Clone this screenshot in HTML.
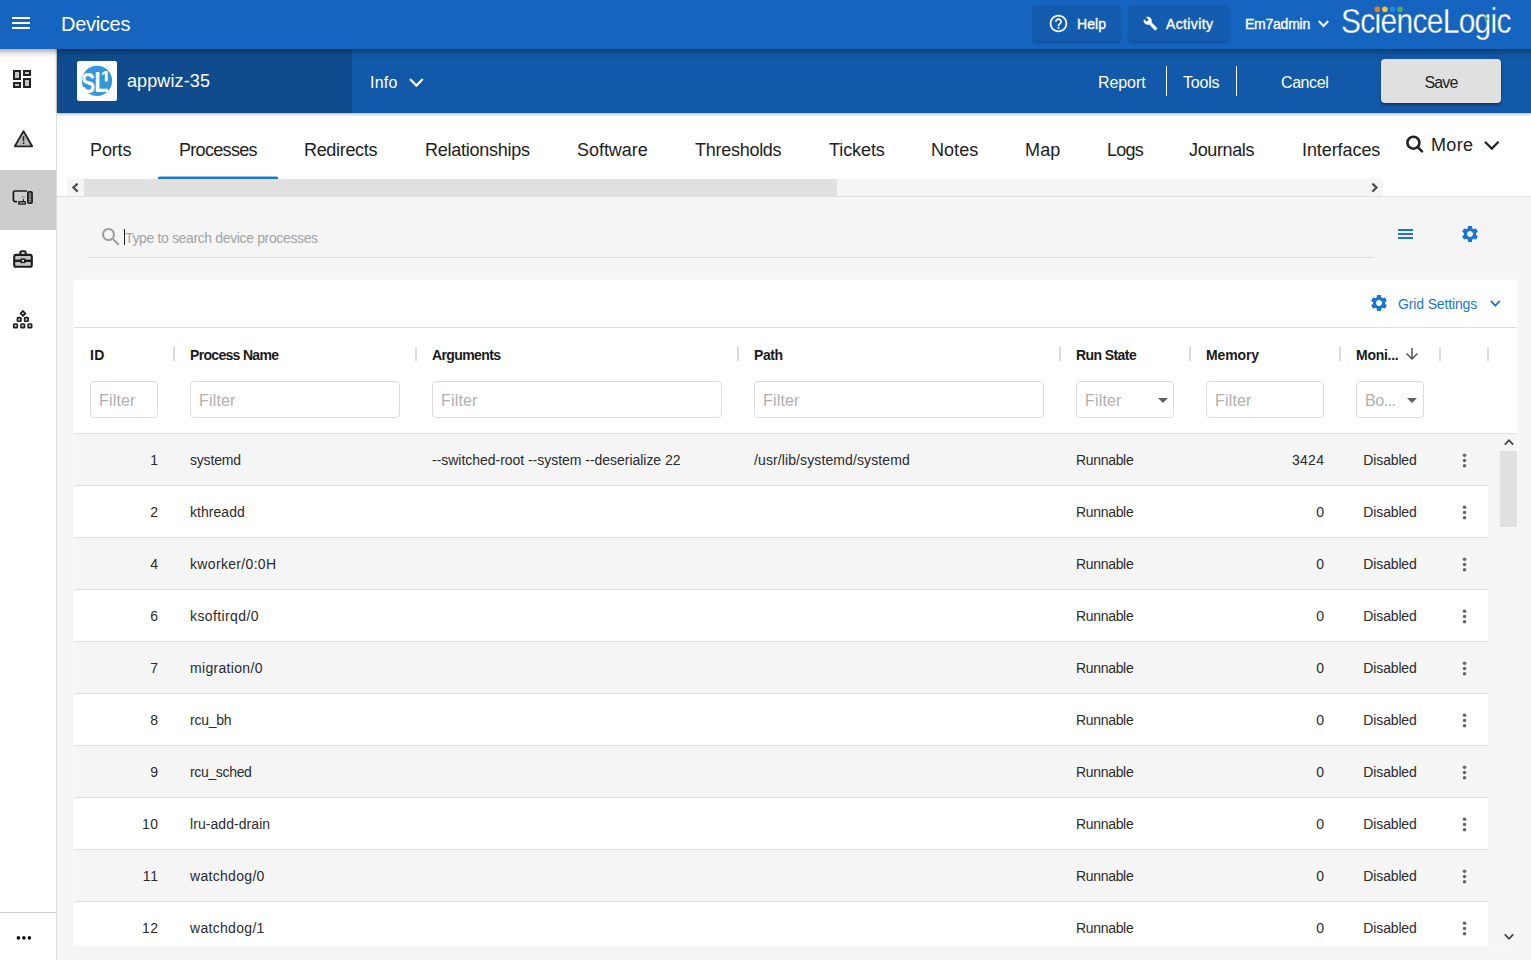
<!DOCTYPE html>
<html lang="en"><head>
<meta charset="utf-8">
<title>Devices</title>
<style>
*{box-sizing:border-box;margin:0;padding:0}
html,body{width:1531px;height:960px;overflow:hidden;background:#f5f5f5;font-family:"Liberation Sans",sans-serif;color:#222}
.abs,#top,#side,#sub,#tabs,#content,#card{position:absolute}
.t{position:absolute;white-space:nowrap;line-height:20px}
svg{position:absolute;display:block;overflow:visible}
/* top bar */
#top{left:0;top:0;width:1531px;height:49px;background:#1565c0;z-index:30;color:#fff}
#topsh{position:absolute;left:-30px;top:0;width:1591px;height:49px;z-index:29;box-shadow:0 2px 4px -1px rgba(0,0,0,.2),0 4px 5px 0 rgba(0,0,0,.14),0 1px 10px 0 rgba(0,0,0,.12)}
#top .title{left:61px;top:4px;font-size:20px;line-height:40px;letter-spacing:-.3px}
.tbtn{position:absolute;top:5px;height:36px;border-radius:4px;background:#145cb0;box-shadow:0 2px 3px rgba(0,0,0,.22)}
#top .s14{font-size:14px;line-height:20px;top:14px;-webkit-text-stroke:.35px #fff}
/* sidebar */
#side{left:0;top:48px;width:57px;height:912px;background:#fff;border-right:1px solid #dcdcdc;z-index:10}
#side .act{position:absolute;left:0;top:122px;width:56px;height:60px;background:#cdcdcd}
#side .sep{position:absolute;left:0;top:864px;width:56px;height:1px;background:#ccc}
/* sub header */
#sub{left:57px;top:48px;width:1474px;height:65px;background:#12599a;z-index:20;color:#fff;box-shadow:0 1px 3px rgba(0,0,0,.35)}
#sub{background:#1259a9}
#sub .dark{position:absolute;left:0;top:0;width:295px;height:65px;background:#104b8e}
#sub .logo{position:absolute;left:20px;top:13px;width:40px;height:40px;background:#fff;border-radius:2px}
#sub .s16{font-size:16px;line-height:20px;top:25px}
#sub .vd{position:absolute;top:18px;width:1px;height:30px;background:#fff}
#sub .save{position:absolute;left:1324px;top:11px;width:120px;height:44px;border-radius:4px;background:#e0e0e0;box-shadow:0 2px 3px rgba(0,0,0,.4);color:#222}
/* tabs */
#tabs{left:57px;top:113px;width:1474px;height:84px;background:#fff;border-bottom:1px solid #e0e0e0}
#tabs .tab{font-size:18px;line-height:24px;top:25px;color:#222}
#tabs .ul{position:absolute;left:101px;top:63px;width:120px;height:3px;background:linear-gradient(rgba(25,118,210,.45) 0,rgba(25,118,210,.45) 1px,#1976d2 1px);border-radius:2px 2px 0 0}
#tabs .sb{position:absolute;left:10px;top:66px;width:1316px;height:17px;background:#f5f5f5}
#tabs .sb .thumb{position:absolute;left:17px;top:0;width:753px;height:17px;background:#e0e0e0}
#tabs .more{font-size:18px;line-height:24px;top:20px;left:1374px;color:#222}
/* content */
#content{left:57px;top:197px;width:1474px;height:763px;background:#f5f5f5}
#content .ph{font-size:14px;line-height:20px;left:68px;top:31px;color:#a3a3a3}
#content .caret{position:absolute;left:67px;top:32px;width:1px;height:16px;background:#222}
#content .sline{position:absolute;left:32px;top:60px;width:1285px;height:1px;background:#dcdcdc}
#card{left:74px;top:280px;width:1443px;height:665px;background:#fff;border-radius:3px;overflow:hidden;box-shadow:0 0 0 1px #fafafa}
#card .gs{font-size:14px;line-height:20px;left:1324px;top:14px;color:#1976d2;letter-spacing:-.15px}
#card .hl{position:absolute;left:0;width:1443px;height:1px;background:#e0e0e0}
#card .vs{position:absolute;top:67px;width:2px;height:14px;background:#dcdcdc}
#card .h{font-size:14px;font-weight:bold;line-height:20px;top:65px;color:#1a1a1a}
#card .f{position:absolute;top:101px;height:37px;border:1px solid #dcdcdc;border-radius:4px;background:#fff;font-size:16px;line-height:37px;color:#b0b0b0;padding-left:8px;white-space:nowrap}
.row{position:absolute;left:0;width:1414px;height:52px;border-bottom:1px solid #e0e0e0;font-size:14px;color:#2b2b2b}
.row.odd{background:#f5f5f5}
.row .c{position:absolute;top:16px;line-height:20px;white-space:nowrap}
.c-id{right:1330px;text-align:right}
.c-name{left:116px}
.c-args{left:358px}
.c-path{left:680px}
.c-run{left:1002px}
.c-mem{right:164px;text-align:right}
.c-mon{left:1266px;width:100px;text-align:center}
.kebab{left:1379.5px;top:15.5px;width:21px;height:21px;fill:#666}
#card .vsb{position:absolute;left:1414px;top:154px;width:29px;height:511px;background:#f5f5f5}
#card .vsb .thumb{position:absolute;left:12px;top:17px;width:17px;height:76px;background:#e0e0e0}

</style>
</head>
<body>
<!-- ===== top bar ===== -->
<div id="topsh"></div>
<div id="top">
  <svg style="left:9px;top:11px" width="24" height="24" viewBox="0 0 24 24" fill="#fff"><path d="M3 18h18v-2H3v2zm0-5h18v-2H3v2zm0-7v2h18V6H3z"></path></svg>
  <span class="t title" style="letter-spacing: -0.29px;">Devices</span>
  <div class="tbtn" style="left:1033px;width:88px"></div>
  <svg style="left:1048px;top:13px" width="21" height="21" viewBox="0 0 24 24" fill="#fff"><path d="M11 18h2v-2h-2v2zm1-16C6.48 2 2 6.48 2 12s4.48 10 10 10 10-4.48 10-10S17.52 2 12 2zm0 18c-4.41 0-8-3.59-8-8s3.59-8 8-8 8 3.59 8 8-3.59 8-8 8zm0-14c-2.21 0-4 1.79-4 4h2c0-1.1.9-2 2-2s2 .9 2 2c0 2-3 1.75-3 5h2c0-2.25 3-2.5 3-5 0-2.21-1.79-4-4-4z"></path></svg>
  <span class="t s14" style="left: 1077px; letter-spacing: 0.06px;">Help</span>
  <div class="tbtn" style="left:1129px;width:100px"></div>
  <svg style="left:1143px;top:16px" width="15" height="15" viewBox="0 0 24 24" fill="#fff"><path d="M22.7 19l-9.1-9.1c.9-2.3.4-5-1.5-6.9-2-2-5-2.4-7.4-1.3L9 6 6 9 1.6 4.7C.4 7.1.9 10.1 2.9 12.1c1.9 1.9 4.6 2.4 6.9 1.5l9.1 9.1c.4.4 1 .4 1.4 0l2.3-2.3c.5-.4.5-1.1.1-1.4z"></path></svg>
  <span class="t s14" style="left: 1166px; letter-spacing: 0.38px;">Activity</span>
  <span class="t s14" style="left: 1245px; letter-spacing: -0.24px;">Em7admin</span>
  <svg style="left:1318px;top:19.5px" width="11" height="8" viewBox="0 0 11 8" fill="none" stroke="#fff" stroke-width="2"><path d="M0.8 1l4.7 5 4.7-5"></path></svg>
  <span class="t brand" style="left:1341px;top:0;font-size:34.5px;line-height:48px;letter-spacing:-.8px;transform:translateY(-3.45px) scaleX(.868);transform-origin:0 0;-webkit-text-stroke:.3px #1565c0">ScienceLogic</span>
  <svg style="left:1374px;top:6px" width="30" height="7" viewBox="0 0 30 7"><circle cx="3.3" cy="3.2" r="2.8" fill="#f57c00"></circle><circle cx="10.9" cy="3.2" r="2.8" fill="#fbc02d"></circle><circle cx="18.6" cy="3.2" r="2.8" fill="#1e88e5"></circle><circle cx="26" cy="3.2" r="2.8" fill="#4caf50"></circle></svg>
  <svg style="left:1484px;top:16px" width="6" height="6" viewBox="0 0 6 6"><path d="M0 0l5 2.5L1 5.5z" fill="#4caf50"></path></svg>
</div>

<!-- ===== sidebar ===== -->
<div id="side">
  <div class="act"></div>
  <div class="sep"></div>
  <!-- dashboard -->
  <svg style="left:12px;top:21px" width="20" height="20" viewBox="0 0 20 20" fill="#c4c4c4" stroke="#222" stroke-width="2"><rect x="2" y="2" width="6" height="8"></rect><rect x="12" y="2" width="6" height="4"></rect><rect x="2" y="14" width="6" height="4"></rect><rect x="12" y="10" width="6" height="8"></rect></svg>
  <!-- warning -->
  <svg style="left:13px;top:81px" width="21" height="19" viewBox="0 0 21 19"><path d="M10.5 2.2L19.2 17.3H1.8z" fill="#bdbdbd" stroke="#222" stroke-width="1.8" stroke-linejoin="round"></path><rect x="9.7" y="7.2" width="1.6" height="5" fill="#222"></rect><rect x="9.7" y="13.4" width="1.6" height="1.7" fill="#222"></rect></svg>
  <!-- devices -->
  <svg style="left:12px;top:141px" width="22" height="17" viewBox="0 0 22 17" fill="none" stroke="#1c1c1c" stroke-width="1.7"><path d="M15 2H3c-.9 0-1.6.6-1.6 1.5v7.6c0 .9.7 1.5 1.6 1.5h2"></path><rect x="15.8" y="2.8" width="4.3" height="11.3" rx="1.2" fill="#666" stroke-width="1.6"></rect><path d="M17.95 5.2v.1M17.95 7.7v.1M17.95 10.3v.1M17.95 12.6v.1" stroke="#d8d8d8" stroke-width="1.1" stroke-linecap="round"></path><rect x="6.7" y="12.7" width="6.6" height="2.4" rx=".4" fill="#aaa" stroke-width="1.3"></rect><path d="M11.4 12V10" stroke-width="1.1"></path><path d="M9.4 8h3.6" stroke-width="1" stroke-opacity=".6" stroke-dasharray="1.3 .5"></path></svg>
  <!-- briefcase -->
  <svg style="left:12px;top:201px" width="22" height="20" viewBox="0 0 22 20" fill="none" stroke="#1c1c1c" stroke-width="2.1"><path d="M8.3 5.4V3.7c0-.9.5-1.4 1.3-1.4h2.8c.8 0 1.3.5 1.3 1.4v1.7"></path><rect x="2.2" y="5.9" width="17.6" height="11.9" rx="1.8" fill="#c4c4c4"></rect><path d="M2.2 11.8h17.6" stroke-width="2.4"></path><rect x="9.3" y="10.2" width="3.4" height="3.2" fill="#fff" stroke-width="1.5"></rect></svg>
  <!-- org -->
  <svg style="left:12px;top:262px" width="22" height="20" viewBox="0 0 22 20" fill="#c8c8c8" stroke="#1c1c1c" stroke-width="1.6"><path d="M11 1l2.4 2.4L11 5.8 8.6 3.4z"></path><rect x="5.4" y="7.6" width="3.6" height="3.6" rx=".7"></rect><rect x="12.6" y="7.6" width="3.6" height="3.6" rx=".7"></rect><rect x="1.7" y="14" width="3.6" height="3.6" rx=".7"></rect><rect x="8.9" y="14" width="3.6" height="3.6" rx=".7"></rect><rect x="16.1" y="14" width="3.6" height="3.6" rx=".7"></rect></svg>
  <!-- more dots -->
  <svg style="left:16px;top:887px" width="16" height="6" viewBox="0 0 16 6" fill="#111"><circle cx="2.4" cy="2.9" r="1.8"></circle><circle cx="7.9" cy="2.9" r="1.8"></circle><circle cx="13.4" cy="2.9" r="1.8"></circle></svg>
</div>

<!-- ===== sub header ===== -->
<div id="sub">
  <div class="dark"></div>
  <div class="logo">
    <svg style="left:5px;top:5px" width="30" height="30" viewBox="0 0 30 30"><defs><clipPath id="c1"><rect x="15" y="0" width="15" height="15.6"></rect></clipPath></defs><circle cx="15" cy="14.8" r="15.1" fill="#3498d8"></circle><g font-family="Liberation Sans, sans-serif" font-weight="bold" fill="#fff"><text transform="translate(-0.9,27.1) scale(.72,1)" font-size="29.6">S</text><text transform="translate(12.2,26.3) scale(.78,1)" font-size="30">L</text><g clip-path="url(#c1)"><text transform="translate(18.6,17.5)" font-size="18.8">1</text></g></g></svg>
  </div>
  <span class="t" style="left: 70px; top: 21px; font-size: 18px; line-height: 24px; letter-spacing: 0.11px;">appwiz-35</span>
  <span class="t s16" style="left: 313px; letter-spacing: 0.22px;">Info</span>
  <svg style="left:352px;top:30px" width="15" height="9" viewBox="0 0 15 9" fill="none" stroke="#fff" stroke-width="2.2"><path d="M1 1l6.4 6.6L13.8 1"></path></svg>
  <span class="t s16" style="left: 1041px; letter-spacing: -0.08px;">Report</span>
  <div class="vd" style="left:1109px"></div>
  <span class="t s16" style="left: 1126px; letter-spacing: -0.2px;">Tools</span>
  <div class="vd" style="left:1179px"></div>
  <span class="t s16" style="left: 1224px; letter-spacing: -0.42px;">Cancel</span>
  <div class="save"><span class="t" style="left: 0px; width: 120px; text-align: center; top: 14px; font-size: 16px; line-height: 20px; letter-spacing: -0.91px;">Save</span></div>
</div>

<!-- ===== tabs ===== -->
<div id="tabs">
  <span class="t tab" style="left: 33px; letter-spacing: -0.13px;">Ports</span>
  <span class="t tab" style="left: 122px; letter-spacing: -0.69px;">Processes</span>
  <span class="t tab" style="left: 247px; letter-spacing: -0.32px;">Redirects</span>
  <span class="t tab" style="left: 368px; letter-spacing: -0.26px;">Relationships</span>
  <span class="t tab" style="left: 520px; letter-spacing: -0.04px;">Software</span>
  <span class="t tab" style="left: 638px; letter-spacing: -0.27px;">Thresholds</span>
  <span class="t tab" style="left: 772px; letter-spacing: -0.08px;">Tickets</span>
  <span class="t tab" style="left: 874px; letter-spacing: 0.04px;">Notes</span>
  <span class="t tab" style="left: 968px; letter-spacing: 0.15px;">Map</span>
  <span class="t tab" style="left: 1050px; letter-spacing: -0.78px;">Logs</span>
  <span class="t tab" style="left: 1132px; letter-spacing: -0.37px;">Journals</span>
  <span class="t tab" style="left: 1245px; letter-spacing: -0.08px;">Interfaces</span>
  <div class="ul"></div>
  <div class="sb"><div class="thumb"></div>
    <svg style="left:4px;top:4px" width="9" height="9" viewBox="0 0 9 9" fill="none" stroke="#505050" stroke-width="2.2"><path d="M6.6 0.6L2.4 4.6l4.2 4"></path></svg>
    <svg style="left:1303px;top:4px" width="9" height="9" viewBox="0 0 9 9" fill="none" stroke="#505050" stroke-width="2.2"><path d="M2.4 0.6l4.2 4-4.2 4"></path></svg>
  </div>
  <svg style="left:1348px;top:22px" width="19" height="19" viewBox="0 0 19 19" fill="none" stroke="#222" stroke-width="2.6"><circle cx="8.4" cy="7.7" r="6"></circle><path d="M12.8 12.2l4.2 4.2" stroke-linecap="round"></path></svg>
  <span class="t more" style="letter-spacing: 0.33px;">More</span>
  <svg style="left:1427px;top:28px" width="16" height="10" viewBox="0 0 16 10" fill="none" stroke="#222" stroke-width="2.2"><path d="M1 0.8l6.8 6.8 6.8-6.8"></path></svg>
</div>

<!-- ===== content ===== -->
<div id="content">
  <svg style="left:42px;top:28px" width="24" height="24" viewBox="0 0 24 24" fill="#a0a0a0"><path d="M15.5 14h-.79l-.28-.27C15.41 12.59 16 11.11 16 9.5 16 5.91 13.09 3 9.5 3S3 5.91 3 9.5 5.91 16 9.5 16c1.61 0 3.09-.59 4.23-1.57l.27.28v.79l5 4.99L20.49 19l-4.99-5zm-6 0C7.01 14 5 11.99 5 9.5S7.01 5 9.5 5 14 7.01 14 9.5 11.99 14 9.5 14z"></path></svg>
  <div class="caret"></div>
  <span class="t ph" style="letter-spacing: -0.36px;">Type to search device processes</span>
  <div class="sline"></div>
  <svg style="left:1341px;top:32px" width="16" height="10" viewBox="0 0 16 10" fill="#1976d2"><rect x="0" y="0" width="15" height="2"></rect><rect x="0" y="4" width="15" height="2"></rect><rect x="0" y="8" width="15" height="2"></rect></svg>
  <svg style="left:1403px;top:27px" width="20" height="20" viewBox="0 0 24 24" fill="#1976d2"><path d="M19.14,12.94c0.04-0.3,0.06-0.61,0.06-0.94c0-0.32-0.02-0.64-0.07-0.94l2.03-1.58c0.18-0.14,0.23-0.41,0.12-0.61 l-1.92-3.32c-0.12-0.22-0.37-0.29-0.59-0.22l-2.39,0.96c-0.5-0.38-1.03-0.7-1.62-0.94L14.4,2.81c-0.04-0.24-0.24-0.41-0.48-0.41 h-3.84c-0.24,0-0.43,0.17-0.47,0.41L9.25,5.35C8.66,5.59,8.12,5.92,7.63,6.29L5.24,5.33c-0.22-0.08-0.47,0-0.59,0.22L2.74,8.87 C2.62,9.08,2.66,9.34,2.86,9.48l2.03,1.58C4.84,11.36,4.8,11.69,4.8,12s0.02,0.64,0.07,0.94l-2.03,1.58 c-0.18,0.14-0.23,0.41-0.12,0.61l1.92,3.32c0.12,0.22,0.37,0.29,0.59,0.22l2.39-0.96c0.5,0.38,1.03,0.7,1.62,0.94l0.36,2.54 c0.05,0.24,0.24,0.41,0.48,0.41h3.84c0.24,0,0.44-0.17,0.47-0.41l0.36-2.54c0.59-0.24,1.13-0.56,1.62-0.94l2.39,0.96 c0.22,0.08,0.47,0,0.59-0.22l1.92-3.32c0.12-0.22,0.07-0.47-0.12-0.61L19.14,12.94z M12,15.6c-1.98,0-3.6-1.62-3.6-3.6 s1.62-3.6,3.6-3.6s3.6,1.62,3.6,3.6S13.98,15.6,12,15.6z"></path></svg>
</div>

<!-- ===== card ===== -->
<div id="card">
  <svg style="left:1295px;top:13px" width="20" height="20" viewBox="0 0 24 24" fill="#1976d2"><path d="M19.14,12.94c0.04-0.3,0.06-0.61,0.06-0.94c0-0.32-0.02-0.64-0.07-0.94l2.03-1.58c0.18-0.14,0.23-0.41,0.12-0.61 l-1.92-3.32c-0.12-0.22-0.37-0.29-0.59-0.22l-2.39,0.96c-0.5-0.38-1.03-0.7-1.62-0.94L14.4,2.81c-0.04-0.24-0.24-0.41-0.48-0.41 h-3.84c-0.24,0-0.43,0.17-0.47,0.41L9.25,5.35C8.66,5.59,8.12,5.92,7.63,6.29L5.24,5.33c-0.22-0.08-0.47,0-0.59,0.22L2.74,8.87 C2.62,9.08,2.66,9.34,2.86,9.48l2.03,1.58C4.84,11.36,4.8,11.69,4.8,12s0.02,0.64,0.07,0.94l-2.03,1.58 c-0.18,0.14-0.23,0.41-0.12,0.61l1.92,3.32c0.12,0.22,0.37,0.29,0.59,0.22l2.39-0.96c0.5,0.38,1.03,0.7,1.62,0.94l0.36,2.54 c0.05,0.24,0.24,0.41,0.48,0.41h3.84c0.24,0,0.44-0.17,0.47-0.41l0.36-2.54c0.59-0.24,1.13-0.56,1.62-0.94l2.39,0.96 c0.22,0.08,0.47,0,0.59-0.22l1.92-3.32c0.12-0.22,0.07-0.47-0.12-0.61L19.14,12.94z M12,15.6c-1.98,0-3.6-1.62-3.6-3.6 s1.62-3.6,3.6-3.6s3.6,1.62,3.6,3.6S13.98,15.6,12,15.6z"></path></svg>
  <span class="t gs" style="letter-spacing: -0.14px;">Grid Settings</span>
  <svg style="left:1416px;top:20px" width="11" height="7" viewBox="0 0 11 7" fill="none" stroke="#1976d2" stroke-width="1.8"><path d="M0.8 0.8l4.5 4.8 4.5-4.8"></path></svg>
  <div class="hl" style="top:47px"></div>
  <div class="hl" style="top:153px"></div>

  <span class="t h" style="left:16px;letter-spacing:.4px">ID</span>
  <span class="t h" style="left:116px;letter-spacing:-.68px">Process Name</span>
  <span class="t h" style="left:358px;letter-spacing:-.6px">Arguments</span>
  <span class="t h" style="left:680px;letter-spacing:-.44px">Path</span>
  <span class="t h" style="left:1002px;letter-spacing:-.58px">Run State</span>
  <span class="t h" style="left: 1132px; letter-spacing: -0.14px;">Memory</span>
  <span class="t h" style="left:1282px;letter-spacing:-.26px">Moni...</span>
  <svg style="left:1329px;top:65px" width="18" height="18" viewBox="0 0 24 24" fill="#555"><path d="M20 12l-1.41-1.41L13 16.17V4h-2v12.17l-5.58-5.59L4 12l8 8 8-8z"></path></svg>
  <div class="vs" style="left:99px"></div><div class="vs" style="left:341px"></div><div class="vs" style="left:663px"></div><div class="vs" style="left:985px"></div><div class="vs" style="left:1115px"></div><div class="vs" style="left:1265px"></div><div class="vs" style="left:1365px"></div><div class="vs" style="left:1413px"></div>

  <div class="f" style="left: 16px; width: 68px; letter-spacing: 0.17px;">Filter</div>
  <div class="f" style="left: 116px; width: 210px; letter-spacing: 0.17px;">Filter</div>
  <div class="f" style="left: 358px; width: 290px; letter-spacing: 0.17px;">Filter</div>
  <div class="f" style="left: 680px; width: 290px; letter-spacing: 0.17px;">Filter</div>
  <div class="f" style="left: 1002px; width: 98px; letter-spacing: 0.17px;">Filter<svg style="left:81px;top:16px" width="10" height="5" viewBox="0 0 10 5" fill="#616161"><path d="M0 0h10L5 5z"></path></svg></div>
  <div class="f" style="left: 1132px; width: 118px; letter-spacing: 0.17px;">Filter</div>
  <div class="f" style="left: 1282px; width: 68px; letter-spacing: -0.46px;">Bo...<svg style="left:50px;top:16px" width="10" height="5" viewBox="0 0 10 5" fill="#616161"><path d="M0 0h10L5 5z"></path></svg></div>

<div class="row odd" style="top:154px"><span class="c c-id" style="letter-spacing: 0.33px; right: 1329.67px;">1</span><span class="c c-name" style="letter-spacing: -0.19px;">systemd</span><span class="c c-args" style="letter-spacing: -0.03px;">--switched-root --system --deserialize 22</span><span class="c c-path" style="letter-spacing: 0.11px;">/usr/lib/systemd/systemd</span><span class="c c-run" style="letter-spacing: -0.32px;">Runnable</span><span class="c c-mem" style="letter-spacing: 0.33px; right: 163.67px;">3424</span><span class="c c-mon" style="letter-spacing: -0.15px;">Disabled</span><svg class="kebab" viewBox="0 0 24 24"><circle cx="12" cy="6" r="2"></circle><circle cx="12" cy="12" r="2"></circle><circle cx="12" cy="18" r="2"></circle></svg></div>
<div class="row" style="top:206px"><span class="c c-id" style="letter-spacing: 0.33px; right: 1329.67px;">2</span><span class="c c-name" style="letter-spacing: 0.04px;">kthreadd</span><span class="c c-run" style="letter-spacing: -0.32px;">Runnable</span><span class="c c-mem" style="letter-spacing: 0.33px; right: 163.67px;">0</span><span class="c c-mon" style="letter-spacing: -0.15px;">Disabled</span><svg class="kebab" viewBox="0 0 24 24"><circle cx="12" cy="6" r="2"></circle><circle cx="12" cy="12" r="2"></circle><circle cx="12" cy="18" r="2"></circle></svg></div>
<div class="row odd" style="top:258px"><span class="c c-id" style="letter-spacing: 0.33px; right: 1329.67px;">4</span><span class="c c-name" style="letter-spacing: 0.33px;">kworker/0:0H</span><span class="c c-run" style="letter-spacing: -0.32px;">Runnable</span><span class="c c-mem" style="letter-spacing: 0.33px; right: 163.67px;">0</span><span class="c c-mon" style="letter-spacing: -0.15px;">Disabled</span><svg class="kebab" viewBox="0 0 24 24"><circle cx="12" cy="6" r="2"></circle><circle cx="12" cy="12" r="2"></circle><circle cx="12" cy="18" r="2"></circle></svg></div>
<div class="row" style="top:310px"><span class="c c-id" style="letter-spacing: 0.33px; right: 1329.67px;">6</span><span class="c c-name" style="letter-spacing: 0.39px;">ksoftirqd/0</span><span class="c c-run" style="letter-spacing: -0.32px;">Runnable</span><span class="c c-mem" style="letter-spacing: 0.33px; right: 163.67px;">0</span><span class="c c-mon" style="letter-spacing: -0.15px;">Disabled</span><svg class="kebab" viewBox="0 0 24 24"><circle cx="12" cy="6" r="2"></circle><circle cx="12" cy="12" r="2"></circle><circle cx="12" cy="18" r="2"></circle></svg></div>
<div class="row odd" style="top:362px"><span class="c c-id" style="letter-spacing: 0.33px; right: 1329.67px;">7</span><span class="c c-name" style="letter-spacing: 0.32px;">migration/0</span><span class="c c-run" style="letter-spacing: -0.32px;">Runnable</span><span class="c c-mem" style="letter-spacing: 0.33px; right: 163.67px;">0</span><span class="c c-mon" style="letter-spacing: -0.15px;">Disabled</span><svg class="kebab" viewBox="0 0 24 24"><circle cx="12" cy="6" r="2"></circle><circle cx="12" cy="12" r="2"></circle><circle cx="12" cy="18" r="2"></circle></svg></div>
<div class="row" style="top:414px"><span class="c c-id" style="letter-spacing: 0.33px; right: 1329.67px;">8</span><span class="c c-name" style="letter-spacing: -0.24px;">rcu_bh</span><span class="c c-run" style="letter-spacing: -0.32px;">Runnable</span><span class="c c-mem" style="letter-spacing: 0.33px; right: 163.67px;">0</span><span class="c c-mon" style="letter-spacing: -0.15px;">Disabled</span><svg class="kebab" viewBox="0 0 24 24"><circle cx="12" cy="6" r="2"></circle><circle cx="12" cy="12" r="2"></circle><circle cx="12" cy="18" r="2"></circle></svg></div>
<div class="row odd" style="top:466px"><span class="c c-id" style="letter-spacing: 0.33px; right: 1329.67px;">9</span><span class="c c-name" style="letter-spacing: -0.34px;">rcu_sched</span><span class="c c-run" style="letter-spacing: -0.32px;">Runnable</span><span class="c c-mem" style="letter-spacing: 0.33px; right: 163.67px;">0</span><span class="c c-mon" style="letter-spacing: -0.15px;">Disabled</span><svg class="kebab" viewBox="0 0 24 24"><circle cx="12" cy="6" r="2"></circle><circle cx="12" cy="12" r="2"></circle><circle cx="12" cy="18" r="2"></circle></svg></div>
<div class="row" style="top:518px"><span class="c c-id" style="letter-spacing: 0.33px; right: 1329.67px;">10</span><span class="c c-name" style="letter-spacing: 0.06px;">lru-add-drain</span><span class="c c-run" style="letter-spacing: -0.32px;">Runnable</span><span class="c c-mem" style="letter-spacing: 0.33px; right: 163.67px;">0</span><span class="c c-mon" style="letter-spacing: -0.15px;">Disabled</span><svg class="kebab" viewBox="0 0 24 24"><circle cx="12" cy="6" r="2"></circle><circle cx="12" cy="12" r="2"></circle><circle cx="12" cy="18" r="2"></circle></svg></div>
<div class="row odd" style="top:570px"><span class="c c-id" style="letter-spacing: 0.85px; right: 1329.15px;">11</span><span class="c c-name" style="letter-spacing: 0.31px;">watchdog/0</span><span class="c c-run" style="letter-spacing: -0.32px;">Runnable</span><span class="c c-mem" style="letter-spacing: 0.33px; right: 163.67px;">0</span><span class="c c-mon" style="letter-spacing: -0.15px;">Disabled</span><svg class="kebab" viewBox="0 0 24 24"><circle cx="12" cy="6" r="2"></circle><circle cx="12" cy="12" r="2"></circle><circle cx="12" cy="18" r="2"></circle></svg></div>
<div class="row" style="top:622px"><span class="c c-id" style="letter-spacing: 0.33px; right: 1329.67px;">12</span><span class="c c-name" style="letter-spacing: 0.31px;">watchdog/1</span><span class="c c-run" style="letter-spacing: -0.32px;">Runnable</span><span class="c c-mem" style="letter-spacing: 0.33px; right: 163.67px;">0</span><span class="c c-mon" style="letter-spacing: -0.15px;">Disabled</span><svg class="kebab" viewBox="0 0 24 24"><circle cx="12" cy="6" r="2"></circle><circle cx="12" cy="12" r="2"></circle><circle cx="12" cy="18" r="2"></circle></svg></div>
  <div class="vsb"><div class="thumb"></div>
    <svg style="left:16px;top:4px" width="10" height="8" viewBox="0 0 10 8" fill="none" stroke="#444" stroke-width="1.8"><path d="M0.8 6.6l4.2-4.4 4.2 4.4"></path></svg>
    <svg style="left:16px;top:499px" width="10" height="8" viewBox="0 0 10 8" fill="none" stroke="#444" stroke-width="1.8"><path d="M0.8 1.4l4.2 4.4 4.2-4.4"></path></svg>
  </div>
</div>


</body></html>
